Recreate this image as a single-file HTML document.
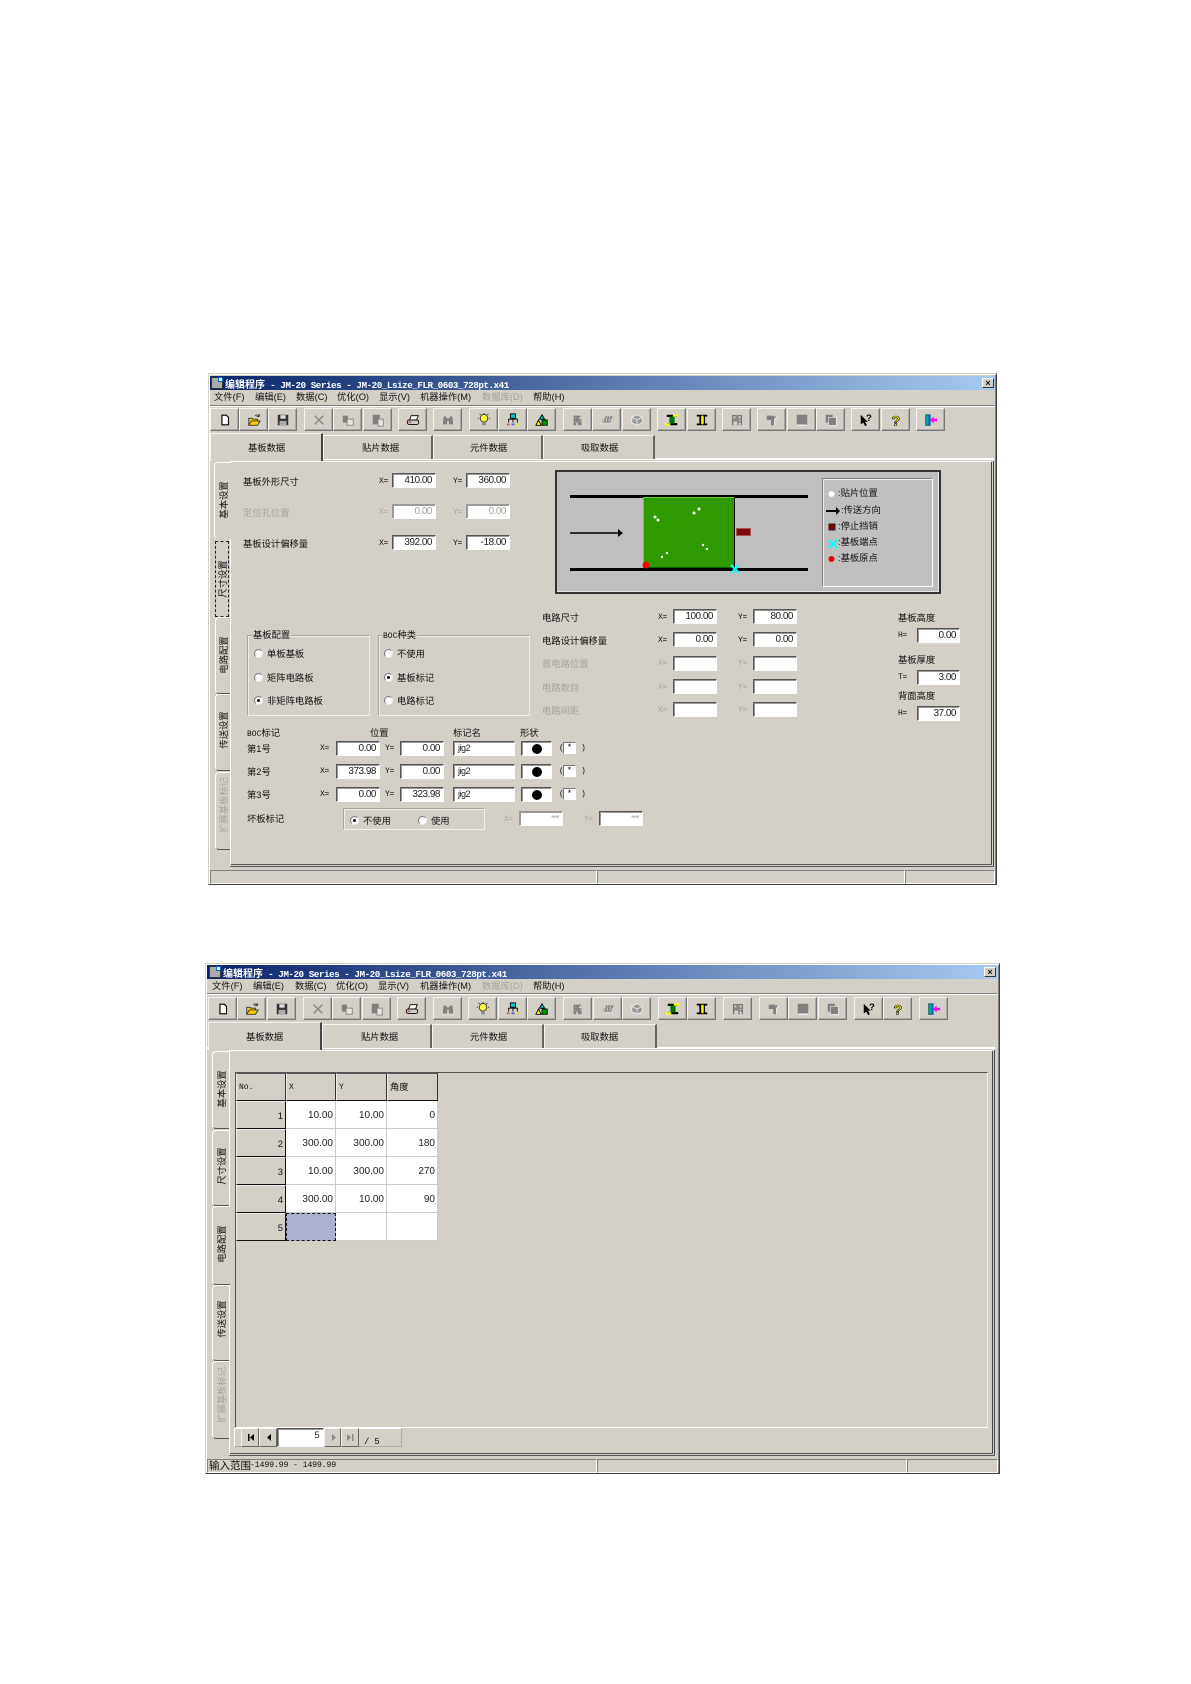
<!DOCTYPE html>
<html><head><meta charset="utf-8"><title>编辑程序</title>
<style>
html,body{margin:0;padding:0;background:#fff}
#p{position:relative;width:1191px;height:1684px;overflow:hidden;background:#fff;font-family:"Liberation Sans","WenQuanYi Zen Hei","Noto Sans CJK SC",sans-serif;font-size:9.3px;color:#111}
#p div{position:absolute;box-sizing:border-box}
.w{background:#d4d0c8;border:1px solid;border-color:#d4d0c8 #404040 #404040 #d4d0c8;box-shadow:inset 1px 1px 0 #fff,inset -1px -1px 0 #808080}
.tb{background:linear-gradient(90deg,#0a246a,#a6caf0);height:14px}
.tt{color:#fff;font:bold 9.3px "Liberation Mono","Noto Sans CJK SC",monospace;letter-spacing:-.5px;white-space:pre;line-height:13px;height:14px}
.tt b{font:bold 10px "Noto Sans CJK SC",sans-serif;letter-spacing:0}
.t{white-space:nowrap;line-height:12px;height:12px;margin-top:1px}
.g{color:#a5a39c}
.m{font-family:"Liberation Mono",monospace;font-size:8px;letter-spacing:-.3px}
.l{background:#808080;height:1px}
.ic{background:#fff;height:1px}
.b{width:29px;height:23px;background:#d4d0c8;border:1px solid;border-color:#f5f4f0 #777 #777 #f5f4f0;box-shadow:inset -1px -1px 0 #aaa}
.b svg{position:absolute;left:6.5px;top:3.5px;width:14px;height:14px}
.tab{background:#d4d0c8;border-top:1px solid #f5f4f0;border-left:1px solid #f5f4f0;border-right:2px solid #666;height:24px}
.tab.s{border-right:2px solid #444}
.v{white-space:nowrap;line-height:12px;transform:translate(-50%,-50%) rotate(-90deg)}
.vt{background:#d4d0c8;border:1px solid #fff;border-right:0;border-bottom:1px solid #555;border-radius:4px 0 0 4px}
.i{background:#fff;border:1px solid;border-color:#555 #fff #fff #555;box-shadow:inset 1px 1px 0 #999;text-align:right;padding-right:3px;font:10px/13px "Liberation Sans",sans-serif;letter-spacing:-.5px;color:#222;white-space:nowrap}
.n{text-align:left;padding-left:4px;font-size:9px}
.r{width:9px;height:9px;border-radius:50%;background:#fff;border:1px solid;border-color:#777 #eee #eee #777}
.r.on:after{content:"";position:absolute;left:2px;top:2px;width:3px;height:3px;border-radius:50%;background:#000}
.gb{border:1px solid;border-color:#a8a59e #f0efeb #f0efeb #a8a59e;box-shadow:inset 1px 1px 0 #eee}
.gt{background:#d4d0c8;padding:0 1px}
.sb{border:1px solid;border-color:#808080 #fff #fff #808080;height:14px}
.dot{width:10px;height:10px;border-radius:50%;background:#000}
.sm{width:13px;height:12px;background:#fff;border:1px solid;border-color:#777 #fff #fff #777;text-align:center;font:9px/11px "Liberation Mono",monospace}
.gh{background:#d4d0c8;border:1px solid;border-color:#555 #333 #111 #eee;font:8px/28px "Liberation Mono","Noto Sans CJK SC",monospace;padding-left:2px}
.gr{background:#d4d0c8;border:1px solid;border-color:#eee #111 #111 #eee;font:9.5px/30px "Liberation Sans",sans-serif;text-align:right;padding-right:2px}
.gc{background:#fff;border-right:1px solid #ccc;border-bottom:1px solid #ccc;font:10px/30px "Liberation Sans",sans-serif;text-align:right;padding-right:2px;color:#222}
.nb{background:#d4d0c8;border:1px solid;border-color:#f5f4f0 #666 #666 #f5f4f0}
.nb svg{position:absolute;left:3px;top:3px;width:11px;height:11px}
</style></head><body><div id="p">
<svg width="0" height="0" style="position:absolute"><defs>
<symbol id="a1" viewBox="0 0 16 16"><path d="M4.500 2.500h5l2.500 2.500v8.500H4.500z" fill="#fff" stroke="#000" stroke-width="1.300"/></symbol>
<symbol id="a2" viewBox="0 0 16 16"><path d="M2 14V6h4l1 1h5v2H5L2 14h10l3-5H5" fill="#fc0" stroke="#333"/><path d="M9 3q3-2 5 1M14 1v3h-3" fill="none" stroke="#333"/></symbol>
<symbol id="a3" viewBox="0 0 16 16"><rect x="2" y="2" width="12" height="12" fill="#333"/><rect x="5" y="2.500" width="6" height="4" fill="#ddd"/><rect x="4" y="9" width="8" height="5" fill="#aaa"/></symbol>
<symbol id="a4" viewBox="0 0 16 16"><path d="M3 3l10 10M13 3L3 13" stroke="#888" stroke-width="1.600"/></symbol>
<symbol id="a5" viewBox="0 0 16 16"><rect x="2" y="3" width="6" height="8" fill="#808080"/><rect x="7" y="7" width="7" height="7" fill="#e8e6e0" stroke="#808080"/></symbol>
<symbol id="a6" viewBox="0 0 16 16"><rect x="2" y="2" width="8" height="11" fill="#808080"/><rect x="8" y="7" width="6" height="8" fill="#e8e6e0" stroke="#808080"/></symbol>
<symbol id="a7" viewBox="0 0 16 16"><path d="M4 8l2-5h8l-2 5z" fill="#fff" stroke="#000"/><rect x="1.500" y="8" width="13" height="5" rx="2" fill="#ccc" stroke="#000"/><rect x="3" y="10" width="3" height="1" fill="#c00"/></symbol>
<symbol id="a8" viewBox="0 0 16 16"><path d="M3 4h3v2h4V4h3l1 9H9V9H7v4H2z" fill="#808080"/></symbol>
<symbol id="a9" viewBox="0 0 16 16"><circle cx="8" cy="6" r="4.300" fill="#ff3" stroke="#333"/><rect x="6" y="10.500" width="4" height="3.500" fill="#888"/><path d="M8 0v1M1 6h1M14 6h1M3 1l1 1M13 1l-1 1" stroke="#000"/></symbol>
<symbol id="a10" viewBox="0 0 16 16"><rect x="5" y="1" width="6" height="5" fill="#0cc" stroke="#000"/><path d="M3 11V7h10v4M8 6v5" fill="none" stroke="#000"/><path d="M1 13h3" stroke="#d00" stroke-width="2" stroke-dasharray="1 1"/><path d="M6.500 13h3" stroke="#00d" stroke-width="2" stroke-dasharray="1 1"/><path d="M12 13h3" stroke="#dd0" stroke-width="2" stroke-dasharray="1 1"/></symbol>
<symbol id="a11" viewBox="0 0 16 16"><path d="M8 2l3 5H5z" fill="#0cc" stroke="#000"/><path d="M4 8l3 6H1z" fill="#ff0" stroke="#000"/><rect x="8" y="8" width="6" height="6" fill="#090" stroke="#000"/></symbol>
<symbol id="a12" viewBox="0 0 16 16"><path d="M3 3h8v2h-2v2h3v7H8v-3H6v3H3z" fill="#808080"/><path d="M5 5h1v1H5zM5 9h1v1H5zM10 9h1v1h-1z" fill="#eee"/></symbol>
<symbol id="a13" viewBox="0 0 16 16"><path d="M3 8l3-4h9l-3 4v3H3z" fill="#808080"/><path d="M3 11v3M6 11v3M9 11v3M12 11v3M5 5l-1 5M8 5l-1 5M11 5l-1 5" stroke="#ddd"/></symbol>
<symbol id="a14" viewBox="0 0 16 16"><path d="M8 2l6 3v6l-6 3-6-3V5z" fill="#999" stroke="#eee"/><path d="M8 8l6-3M8 8v6M8 8L2 5" stroke="#eee"/></symbol>
<symbol id="a15" viewBox="0 0 16 16"><rect x="2" y="2" width="12" height="2.500" fill="#000"/><rect x="2" y="11.500" width="12" height="2.500" fill="#000"/><rect x="5" y="4" width="6" height="8" fill="#070"/><path d="M9 3h6M6 13H0" stroke="#ff0" stroke-width="2.500" fill="none"/></symbol>
<symbol id="a16" viewBox="0 0 16 16"><rect x="2" y="2" width="12" height="2" fill="#000"/><rect x="2" y="12" width="12" height="2" fill="#000"/><rect x="5" y="4" width="2" height="8" fill="#000"/><rect x="10" y="4" width="1.500" height="8" fill="#000"/><path d="M8.500 3v10" stroke="#ff0" stroke-width="2"/></symbol>
<symbol id="a17" viewBox="0 0 16 16"><path d="M3 3h4v4H3zM9 3h4v4H9zM3 7v7M7 7v2H2M9 7v7M13 7v7M9 10h4" fill="none" stroke="#777" stroke-width="1.500"/></symbol>
<symbol id="a18" viewBox="0 0 16 16"><path d="M2 3h7l1 1h4l-3 3v7H7V8H2z" fill="#808080"/><path d="M14 4l-3 3v7" stroke="#fff" fill="none"/></symbol>
<symbol id="a19" viewBox="0 0 16 16"><rect x="2" y="2" width="12" height="11" fill="#808080"/><path d="M3 14h10" stroke="#fff"/></symbol>
<symbol id="a20" viewBox="0 0 16 16"><rect x="2" y="2" width="8" height="9" fill="#808080"/><rect x="5" y="5" width="9" height="9" fill="#808080" stroke="#fff" stroke-width=".6"/></symbol>
<symbol id="a21" viewBox="0 0 16 16"><path d="M2 2v11l3-2 2 4 2-1-2-4h3z" fill="#000"/><text x="8" y="9" font-family="Liberation Sans" font-weight="bold" font-size="11" fill="#000">?</text></symbol>
<symbol id="a22" viewBox="0 0 16 16"><text x="3" y="14" font-family="Liberation Sans" font-weight="bold" font-size="16" fill="#ff0" stroke="#000" stroke-width=".7">?</text></symbol>
<symbol id="a23" viewBox="0 0 16 16"><path d="M2 2h5v12H2z" fill="#0aa" stroke="#055"/><path d="M6 2v12" stroke="#06c" stroke-width="2"/><path d="M7 8l4-4v2.500h4v3h-4V12z" fill="#f0f"/></symbol>
</defs></svg>

<!-- WINDOW 1 -->
<div class="w" style="left:208px;top:373px;width:789px;height:512px"></div>
<div class="tb" style="left:210px;top:376px;width:785px"></div>
<div style="left:211px;top:377px;width:12px;height:12px;background:#aaa;border:1px solid #333"></div>
<div style="left:218px;top:377px;width:5px;height:5px;background:#fff;border:1px solid #06c"></div>
<div class="tt" style="left:225px;top:376px"><b>编辑程序</b> - JM-20 Series - JM-20_Lsize_FLR_0603_728pt.x41</div>
<div style="left:982px;top:378px;width:12px;height:10px;background:#d4d0c8;border:1px solid;border-color:#fff #333 #333 #fff;font:bold 9px/8px 'Liberation Sans';text-align:center">×</div>
<div class="t" style="left:214px;top:390px">文件(F)</div><div class="t" style="left:255px;top:390px">编辑(E)</div><div class="t" style="left:296px;top:390px">数据(C)</div><div class="t" style="left:337px;top:390px">优化(O)</div><div class="t" style="left:379px;top:390px">显示(V)</div><div class="t" style="left:420px;top:390px">机器操作(M)</div><div class="t g" style="left:482px;top:390px">数据库(D)</div><div class="t" style="left:533px;top:390px">帮助(H)</div>
<div class="l" style="left:210px;top:405px;width:785px"></div><div class="ic" style="left:210px;top:406px;width:785px"></div>

<div class="b" style="left:210px;top:408px"><svg><use href="#a1"/></svg></div><div class="b" style="left:239px;top:408px"><svg><use href="#a2"/></svg></div><div class="b" style="left:268px;top:408px"><svg><use href="#a3"/></svg></div>
<div class="b" style="left:304px;top:408px"><svg><use href="#a4"/></svg></div><div class="b" style="left:333px;top:408px"><svg><use href="#a5"/></svg></div><div class="b" style="left:363px;top:408px"><svg><use href="#a6"/></svg></div>
<div class="b" style="left:398px;top:408px"><svg><use href="#a7"/></svg></div><div class="b" style="left:433px;top:408px"><svg><use href="#a8"/></svg></div>
<div class="b" style="left:469px;top:408px"><svg><use href="#a9"/></svg></div><div class="b" style="left:498px;top:408px"><svg><use href="#a10"/></svg></div><div class="b" style="left:527px;top:408px"><svg><use href="#a11"/></svg></div>
<div class="b" style="left:563px;top:408px"><svg><use href="#a12"/></svg></div><div class="b" style="left:592px;top:408px"><svg><use href="#a13"/></svg></div><div class="b" style="left:622px;top:408px"><svg><use href="#a14"/></svg></div>
<div class="b" style="left:657px;top:408px"><svg><use href="#a15"/></svg></div><div class="b" style="left:687px;top:408px"><svg><use href="#a16"/></svg></div><div class="b" style="left:722px;top:408px"><svg><use href="#a17"/></svg></div>
<div class="b" style="left:757px;top:408px"><svg><use href="#a18"/></svg></div><div class="b" style="left:787px;top:408px"><svg><use href="#a19"/></svg></div><div class="b" style="left:816px;top:408px"><svg><use href="#a20"/></svg></div>
<div class="b" style="left:851px;top:408px"><svg><use href="#a21"/></svg></div><div class="b" style="left:881px;top:408px"><svg><use href="#a22"/></svg></div><div class="b" style="left:916px;top:408px"><svg><use href="#a23"/></svg></div>

<div class="ic" style="left:210px;top:458px;width:784px;height:2px"></div>
<div class="tab" style="left:323px;top:435px;width:110px"></div><div class="tab" style="left:433px;top:435px;width:110px"></div><div class="tab" style="left:543px;top:435px;width:112px"></div>
<div class="tab s" style="left:210px;top:433px;width:113px;height:28px"></div>
<div class="t" style="left:248px;top:441px">基板数据</div><div class="t" style="left:362px;top:441px">贴片数据</div><div class="t" style="left:470px;top:441px">元件数据</div><div class="t" style="left:581px;top:441px">吸取数据</div>

<!-- page frame -->
<div style="left:230px;top:461px;width:764px;height:406px;border-left:1px solid #fff;border-top:1px solid #fff;border-right:3px double #444;border-bottom:3px double #555"></div>
<div class="vt" style="left:214px;top:462px;width:17px;height:77px;border-bottom:0;background:#d4d0c8"></div>
<div class="v" style="left:224px;top:500px">基本设置</div>
<div style="left:215px;top:541px;width:14px;height:76px;border:1px dashed #222"></div>
<div class="v" style="left:223px;top:579px">尺寸设置</div>
<div class="vt" style="left:215px;top:617px;width:15px;height:77px"></div>
<div class="v" style="left:224px;top:655px">电路配置</div>
<div class="vt" style="left:215px;top:694px;width:15px;height:77px"></div>
<div class="v" style="left:224px;top:730px">传送设置</div>
<div class="vt" style="left:215px;top:772px;width:15px;height:78px"></div>
<div class="v g" style="left:224px;top:805px">扩展基板标记</div>

<div class="t" style="left:243px;top:475px;">基板外形尺寸</div><div class="t g" style="left:243px;top:506px">定位孔位置</div><div class="t" style="left:243px;top:537px">基板设计偏移量</div>
<div class="t m" style="left:379px;top:475px">X=</div><div class="t m" style="left:453px;top:475px">Y=</div><div class="t m g" style="left:379px;top:506px">X=</div><div class="t m g" style="left:453px;top:506px">Y=</div><div class="t m" style="left:379px;top:537px">X=</div><div class="t m" style="left:453px;top:537px">Y=</div>
<div class="i" style="left:392px;top:473px;width:44px;height:15px">410.00</div><div class="i" style="left:466px;top:473px;width:44px;height:15px">360.00</div>
<div class="i g" style="left:392px;top:504px;width:44px;height:15px;border-color:#999 #fff #fff #999;color:#a5a39c">0.00</div><div class="i g" style="left:466px;top:504px;width:44px;height:15px;border-color:#999 #fff #fff #999;color:#a5a39c">0.00</div>
<div class="i" style="left:392px;top:535px;width:44px;height:15px">392.00</div><div class="i" style="left:466px;top:535px;width:44px;height:15px">-18.00</div>

<!-- diagram -->
<div style="left:555px;top:470px;width:386px;height:124px;background:#bfbfbf;border:2px solid #333;box-shadow:inset -1px -1px 0 #e6e6e6"></div>
<div style="left:570px;top:495px;width:238px;height:3px;background:#000"></div>
<div style="left:570px;top:568px;width:238px;height:3px;background:#000"></div>
<div style="left:643px;top:497px;width:92px;height:71px;background:#2f9a00;border:1px solid;border-color:#6c3 #000 #060 #6c3"></div>
<div style="left:736px;top:528px;width:15px;height:8px;background:#7f0a0a;border:1px solid #a55"></div>
<svg style="position:absolute;left:555px;top:470px" width="386" height="124" viewBox="555 470 386 124">
<path d="M570 533h52" stroke="#000" stroke-width="1.500"/><path d="M618 529l5 4-5 4z" fill="#000"/>
<g fill="#fff"><circle cx="655" cy="517" r="1.500"/><circle cx="658" cy="520" r="1.500"/><circle cx="694" cy="513" r="1.500"/><circle cx="699" cy="509" r="1.500"/><circle cx="662" cy="557" r="1.200"/><circle cx="667" cy="553" r="1.200"/><circle cx="703" cy="545" r="1.200"/><circle cx="707" cy="549" r="1.200"/></g>
<circle cx="646" cy="565" r="3.500" fill="#e00"/>
<path d="M731 565l8 8M739 565l-8 8" stroke="#0ff" stroke-width="2"/>
</svg>
<div style="left:822px;top:478px;width:111px;height:109px;border:1px solid;border-color:#808080 #fff #fff #808080;box-shadow:inset 1px 1px 0 #eee"></div>
<svg style="position:absolute;left:822px;top:485px" width="24" height="85" viewBox="822 485 24 85">
<circle cx="831.500" cy="494" r="3" fill="#fff"/><path d="M826 511h10" stroke="#000" stroke-width="2"/><path d="M836 507l4 4-4 4z" fill="#000"/>
<rect x="829" y="524" width="6" height="6" fill="#800" stroke="#222"/>
<path d="M829 540l8 8M837 540l-8 8" stroke="#0ff" stroke-width="2"/><circle cx="831.500" cy="559" r="3" fill="#e00"/>
</svg>
<div class="t" style="left:838px;top:486px">:贴片位置</div><div class="t" style="left:841px;top:503px">:传送方向</div><div class="t" style="left:838px;top:519px">:停止挡销</div><div class="t" style="left:838px;top:535px">:基板端点</div><div class="t" style="left:838px;top:551px">:基板原点</div>

<!-- circuit -->
<div class="t" style="left:542px;top:611px">电路尺寸</div><div class="t" style="left:542px;top:634px">电路设计偏移量</div><div class="t g" style="left:542px;top:657px">首电路位置</div><div class="t g" style="left:542px;top:681px">电路数目</div><div class="t g" style="left:542px;top:704px">电路间距</div>
<div class="t m" style="left:658px;top:611px">X=</div><div class="t m" style="left:738px;top:611px">Y=</div><div class="t m" style="left:658px;top:634px">X=</div><div class="t m" style="left:738px;top:634px">Y=</div>
<div class="t m g" style="left:658px;top:657px">X=</div><div class="t m g" style="left:738px;top:657px">Y=</div><div class="t m g" style="left:658px;top:681px">X=</div><div class="t m g" style="left:738px;top:681px">Y=</div><div class="t m g" style="left:658px;top:704px">X=</div><div class="t m g" style="left:738px;top:704px">Y=</div>
<div class="i" style="left:673px;top:609px;width:44px;height:15px">100.00</div><div class="i" style="left:753px;top:609px;width:44px;height:15px">80.00</div>
<div class="i" style="left:673px;top:632px;width:44px;height:15px">0.00</div><div class="i" style="left:753px;top:632px;width:44px;height:15px">0.00</div>
<div class="i" style="left:673px;top:656px;width:44px;height:15px"></div><div class="i" style="left:753px;top:656px;width:44px;height:15px"></div>
<div class="i" style="left:673px;top:679px;width:44px;height:15px"></div><div class="i" style="left:753px;top:679px;width:44px;height:15px"></div>
<div class="i" style="left:673px;top:702px;width:44px;height:15px"></div><div class="i" style="left:753px;top:702px;width:44px;height:15px"></div>
<div class="t" style="left:898px;top:611px">基板高度</div><div class="t" style="left:898px;top:653px">基板厚度</div><div class="t" style="left:898px;top:689px">背面高度</div>
<div class="t m" style="left:898px;top:629px">H=</div><div class="t m" style="left:898px;top:671px">T=</div><div class="t m" style="left:898px;top:707px">H=</div>
<div class="i" style="left:917px;top:628px;width:43px;height:15px">0.00</div><div class="i" style="left:917px;top:670px;width:43px;height:15px">3.00</div><div class="i" style="left:917px;top:706px;width:43px;height:15px">37.00</div>

<!-- groups -->
<div class="gb" style="left:247px;top:635px;width:123px;height:81px"></div><div class="t gt" style="left:252px;top:628px">基板配置</div>
<div class="gb" style="left:378px;top:635px;width:152px;height:81px"></div><div class="t gt" style="left:382px;top:628px"><span style="font-family:'Liberation Mono';font-size:8px">BOC</span>种类</div>
<div class="r" style="left:254px;top:649px"></div><div class="t" style="left:267px;top:647px">单板基板</div>
<div class="r" style="left:254px;top:673px"></div><div class="t" style="left:267px;top:671px">矩阵电路板</div>
<div class="r on" style="left:254px;top:696px"></div><div class="t" style="left:267px;top:694px">非矩阵电路板</div>
<div class="r" style="left:384px;top:649px"></div><div class="t" style="left:397px;top:647px">不使用</div>
<div class="r on" style="left:384px;top:673px"></div><div class="t" style="left:397px;top:671px">基板标记</div>
<div class="r" style="left:384px;top:696px"></div><div class="t" style="left:397px;top:694px">电路标记</div>

<div class="t" style="left:247px;top:726px"><span style="font-family:'Liberation Mono';font-size:8px">BOC</span>标记</div><div class="t" style="left:370px;top:726px">位置</div><div class="t" style="left:453px;top:726px">标记名</div><div class="t" style="left:520px;top:726px">形状</div>
<div class="t" style="left:247px;top:742px">第1号</div><div class="t" style="left:247px;top:765px">第2号</div><div class="t" style="left:247px;top:788px">第3号</div>
<div class="t m" style="left:320px;top:742px">X=</div><div class="t m" style="left:385px;top:742px">Y=</div><div class="t m" style="left:320px;top:765px">X=</div><div class="t m" style="left:385px;top:765px">Y=</div><div class="t m" style="left:320px;top:788px">X=</div><div class="t m" style="left:385px;top:788px">Y=</div>
<div class="i" style="left:336px;top:741px;width:44px;height:15px">0.00</div><div class="i" style="left:400px;top:741px;width:44px;height:15px">0.00</div><div class="i n" style="left:453px;top:741px;width:62px;height:15px">jig2</div><div class="i" style="left:521px;top:741px;width:31px;height:15px"></div><div class="dot" style="left:532px;top:744px"></div><div class="t m" style="left:559px;top:742px">(</div><div class="sm" style="left:563px;top:742px">*</div><div class="t m" style="left:581px;top:742px">)</div>
<div class="i" style="left:336px;top:764px;width:44px;height:15px">373.98</div><div class="i" style="left:400px;top:764px;width:44px;height:15px">0.00</div><div class="i n" style="left:453px;top:764px;width:62px;height:15px">jig2</div><div class="i" style="left:521px;top:764px;width:31px;height:15px"></div><div class="dot" style="left:532px;top:767px"></div><div class="t m" style="left:559px;top:765px">(</div><div class="sm" style="left:563px;top:765px">*</div><div class="t m" style="left:581px;top:765px">)</div>
<div class="i" style="left:336px;top:787px;width:44px;height:15px">0.00</div><div class="i" style="left:400px;top:787px;width:44px;height:15px">323.98</div><div class="i n" style="left:453px;top:787px;width:62px;height:15px">jig2</div><div class="i" style="left:521px;top:787px;width:31px;height:15px"></div><div class="dot" style="left:532px;top:790px"></div><div class="t m" style="left:559px;top:788px">(</div><div class="sm" style="left:563px;top:788px">*</div><div class="t m" style="left:581px;top:788px">)</div>
<div class="t" style="left:247px;top:812px">坏板标记</div>
<div class="gb" style="left:343px;top:808px;width:142px;height:22px"></div>
<div class="r on" style="left:350px;top:816px"></div><div class="t" style="left:363px;top:814px">不使用</div><div class="r" style="left:418px;top:816px"></div><div class="t" style="left:431px;top:814px">使用</div>
<div class="t m g" style="left:504px;top:813px">X=</div><div class="t m g" style="left:584px;top:813px">Y=</div>
<div class="i" style="left:519px;top:811px;width:44px;height:15px;border-color:#999 #fff #fff #999;font-size:8px;color:#999">***</div><div class="i" style="left:599px;top:811px;width:44px;height:15px;font-size:8px;color:#999">***</div>
<div class="sb" style="left:210px;top:870px;width:387px"></div><div class="sb" style="left:597px;top:870px;width:308px"></div><div class="sb" style="left:905px;top:870px;width:90px"></div>

<!-- WINDOW 2 -->
<div class="w" style="left:205px;top:963px;width:795px;height:511px"></div>
<div class="tb" style="left:207px;top:965px;width:790px"></div>
<div style="left:209px;top:966px;width:12px;height:12px;background:#aaa;border:1px solid #333"></div>
<div style="left:216px;top:966px;width:5px;height:5px;background:#fff;border:1px solid #06c"></div>
<div class="tt" style="left:223px;top:965px"><b>编辑程序</b> - JM-20 Series - JM-20_Lsize_FLR_0603_728pt.x41</div>
<div style="left:984px;top:967px;width:12px;height:10px;background:#d4d0c8;border:1px solid;border-color:#fff #333 #333 #fff;font:bold 9px/8px 'Liberation Sans';text-align:center">×</div>
<div class="t" style="left:212px;top:979px">文件(F)</div><div class="t" style="left:253px;top:979px">编辑(E)</div><div class="t" style="left:295px;top:979px">数据(C)</div><div class="t" style="left:336px;top:979px">优化(O)</div><div class="t" style="left:378px;top:979px">显示(V)</div><div class="t" style="left:420px;top:979px">机器操作(M)</div><div class="t g" style="left:482px;top:979px">数据库(D)</div><div class="t" style="left:533px;top:979px">帮助(H)</div>
<div class="l" style="left:207px;top:993px;width:790px"></div><div class="ic" style="left:207px;top:994px;width:790px"></div>

<div class="b" style="left:208px;top:997px"><svg><use href="#a1"/></svg></div><div class="b" style="left:237px;top:997px"><svg><use href="#a2"/></svg></div><div class="b" style="left:267px;top:997px"><svg><use href="#a3"/></svg></div>
<div class="b" style="left:303px;top:997px"><svg><use href="#a4"/></svg></div><div class="b" style="left:332px;top:997px"><svg><use href="#a5"/></svg></div><div class="b" style="left:362px;top:997px"><svg><use href="#a6"/></svg></div>
<div class="b" style="left:397px;top:997px"><svg><use href="#a7"/></svg></div><div class="b" style="left:433px;top:997px"><svg><use href="#a8"/></svg></div>
<div class="b" style="left:468px;top:997px"><svg><use href="#a9"/></svg></div><div class="b" style="left:498px;top:997px"><svg><use href="#a10"/></svg></div><div class="b" style="left:527px;top:997px"><svg><use href="#a11"/></svg></div>
<div class="b" style="left:563px;top:997px"><svg><use href="#a12"/></svg></div><div class="b" style="left:593px;top:997px"><svg><use href="#a13"/></svg></div><div class="b" style="left:622px;top:997px"><svg><use href="#a14"/></svg></div>
<div class="b" style="left:658px;top:997px"><svg><use href="#a15"/></svg></div><div class="b" style="left:687px;top:997px"><svg><use href="#a16"/></svg></div><div class="b" style="left:723px;top:997px"><svg><use href="#a17"/></svg></div>
<div class="b" style="left:759px;top:997px"><svg><use href="#a18"/></svg></div><div class="b" style="left:788px;top:997px"><svg><use href="#a19"/></svg></div><div class="b" style="left:818px;top:997px"><svg><use href="#a20"/></svg></div>
<div class="b" style="left:854px;top:997px"><svg><use href="#a21"/></svg></div><div class="b" style="left:883px;top:997px"><svg><use href="#a22"/></svg></div><div class="b" style="left:919px;top:997px"><svg><use href="#a23"/></svg></div>

<div class="ic" style="left:207px;top:1047px;width:788px;height:2px"></div>
<div class="tab" style="left:322px;top:1024px;width:110px"></div><div class="tab" style="left:432px;top:1024px;width:112px"></div><div class="tab" style="left:544px;top:1024px;width:113px"></div>
<div class="tab s" style="left:208px;top:1022px;width:114px;height:28px"></div>
<div class="t" style="left:246px;top:1030px">基板数据</div><div class="t" style="left:361px;top:1030px">贴片数据</div><div class="t" style="left:470px;top:1030px">元件数据</div><div class="t" style="left:581px;top:1030px">吸取数据</div>

<div style="left:229px;top:1050px;width:766px;height:406px;border-left:1px solid #fff;border-top:1px solid #fff;border-right:3px double #444;border-bottom:3px double #555"></div>
<div style="left:235px;top:1072px;width:753px;height:356px;border:1px solid;border-color:#555 #eee #fff #555"></div>
<div class="vt" style="left:212px;top:1051px;width:17px;height:78px"></div><div class="v" style="left:222px;top:1089px">基本设置</div>
<div class="vt" style="left:212px;top:1130px;width:17px;height:76px"></div><div class="v" style="left:222px;top:1166px">尺寸设置</div>
<div class="vt" style="left:212px;top:1206px;width:18px;height:79px"></div><div class="v" style="left:222px;top:1244px">电路配置</div>
<div class="vt" style="left:212px;top:1285px;width:17px;height:76px"></div><div class="v" style="left:222px;top:1319px">传送设置</div>
<div class="vt" style="left:212px;top:1361px;width:17px;height:78px"></div><div class="v g" style="left:222px;top:1395px">扩展基板标记</div>

<!-- grid -->
<div class="gh" style="left:236px;top:1073px;width:50px;height:28px">No.</div><div class="gh" style="left:286px;top:1073px;width:50px;height:28px">X</div><div class="gh" style="left:336px;top:1073px;width:51px;height:28px">Y</div><div class="gh" style="left:387px;top:1073px;width:51px;height:28px;font-size:9.3px">角度</div>
<div class="gr" style="left:236px;top:1101px;width:50px;height:28px">1</div><div class="gc" style="left:286px;top:1101px;width:50px;height:28px">10.00</div><div class="gc" style="left:336px;top:1101px;width:51px;height:28px">10.00</div><div class="gc" style="left:387px;top:1101px;width:51px;height:28px">0</div>
<div class="gr" style="left:236px;top:1129px;width:50px;height:28px">2</div><div class="gc" style="left:286px;top:1129px;width:50px;height:28px">300.00</div><div class="gc" style="left:336px;top:1129px;width:51px;height:28px">300.00</div><div class="gc" style="left:387px;top:1129px;width:51px;height:28px">180</div>
<div class="gr" style="left:236px;top:1157px;width:50px;height:28px">3</div><div class="gc" style="left:286px;top:1157px;width:50px;height:28px">10.00</div><div class="gc" style="left:336px;top:1157px;width:51px;height:28px">300.00</div><div class="gc" style="left:387px;top:1157px;width:51px;height:28px">270</div>
<div class="gr" style="left:236px;top:1185px;width:50px;height:28px">4</div><div class="gc" style="left:286px;top:1185px;width:50px;height:28px">300.00</div><div class="gc" style="left:336px;top:1185px;width:51px;height:28px">10.00</div><div class="gc" style="left:387px;top:1185px;width:51px;height:28px">90</div>
<div class="gr" style="left:236px;top:1213px;width:50px;height:28px">5</div><div style="left:286px;top:1213px;width:50px;height:28px;background:#abb0cf;border:1px dashed #111"></div><div class="gc" style="left:336px;top:1213px;width:51px;height:28px"></div><div class="gc" style="left:387px;top:1213px;width:51px;height:28px"></div>

<!-- nav -->
<div style="left:234px;top:1428px;width:168px;height:19px;background:#d4d0c8;border:1px solid;border-color:#fff #aaa #aaa #fff"></div>
<div class="nb" style="left:241px;top:1428px;width:18px;height:19px"><svg viewBox="0 0 11 11"><path d="M3 2h1.500v7H3zM9 2v7L5 5.500z" fill="#000"/></svg></div>
<div class="nb" style="left:259px;top:1428px;width:18px;height:19px"><svg viewBox="0 0 11 11"><path d="M8 2v7L4 5.500z" fill="#000"/></svg></div>
<div class="i" style="left:277px;top:1428px;width:47px;height:19px;font-size:9px;padding-right:4px">5</div>
<div class="nb" style="left:324px;top:1428px;width:17px;height:19px"><svg viewBox="0 0 11 11"><path d="M4 2v7l4-3.500z" fill="#888"/></svg></div>
<div class="nb" style="left:341px;top:1428px;width:18px;height:19px"><svg viewBox="0 0 11 11"><path d="M2 2v7l4-3.500zM7 2h1.500v7H7z" fill="#888"/></svg></div>
<div class="t m" style="left:364px;top:1435px;font-size:9px">/ 5</div>
<div class="sb" style="left:207px;top:1459px;width:390px"></div><div class="sb" style="left:597px;top:1459px;width:310px"></div><div class="sb" style="left:907px;top:1459px;width:91px"></div>
<div class="t" style="left:209px;top:1459px;font-size:10.5px">输入范围</div><div class="t m" style="left:250px;top:1459px;font-size:8.3px;letter-spacing:-.2px">-1499.99 - 1499.99</div>
</div></body></html>
